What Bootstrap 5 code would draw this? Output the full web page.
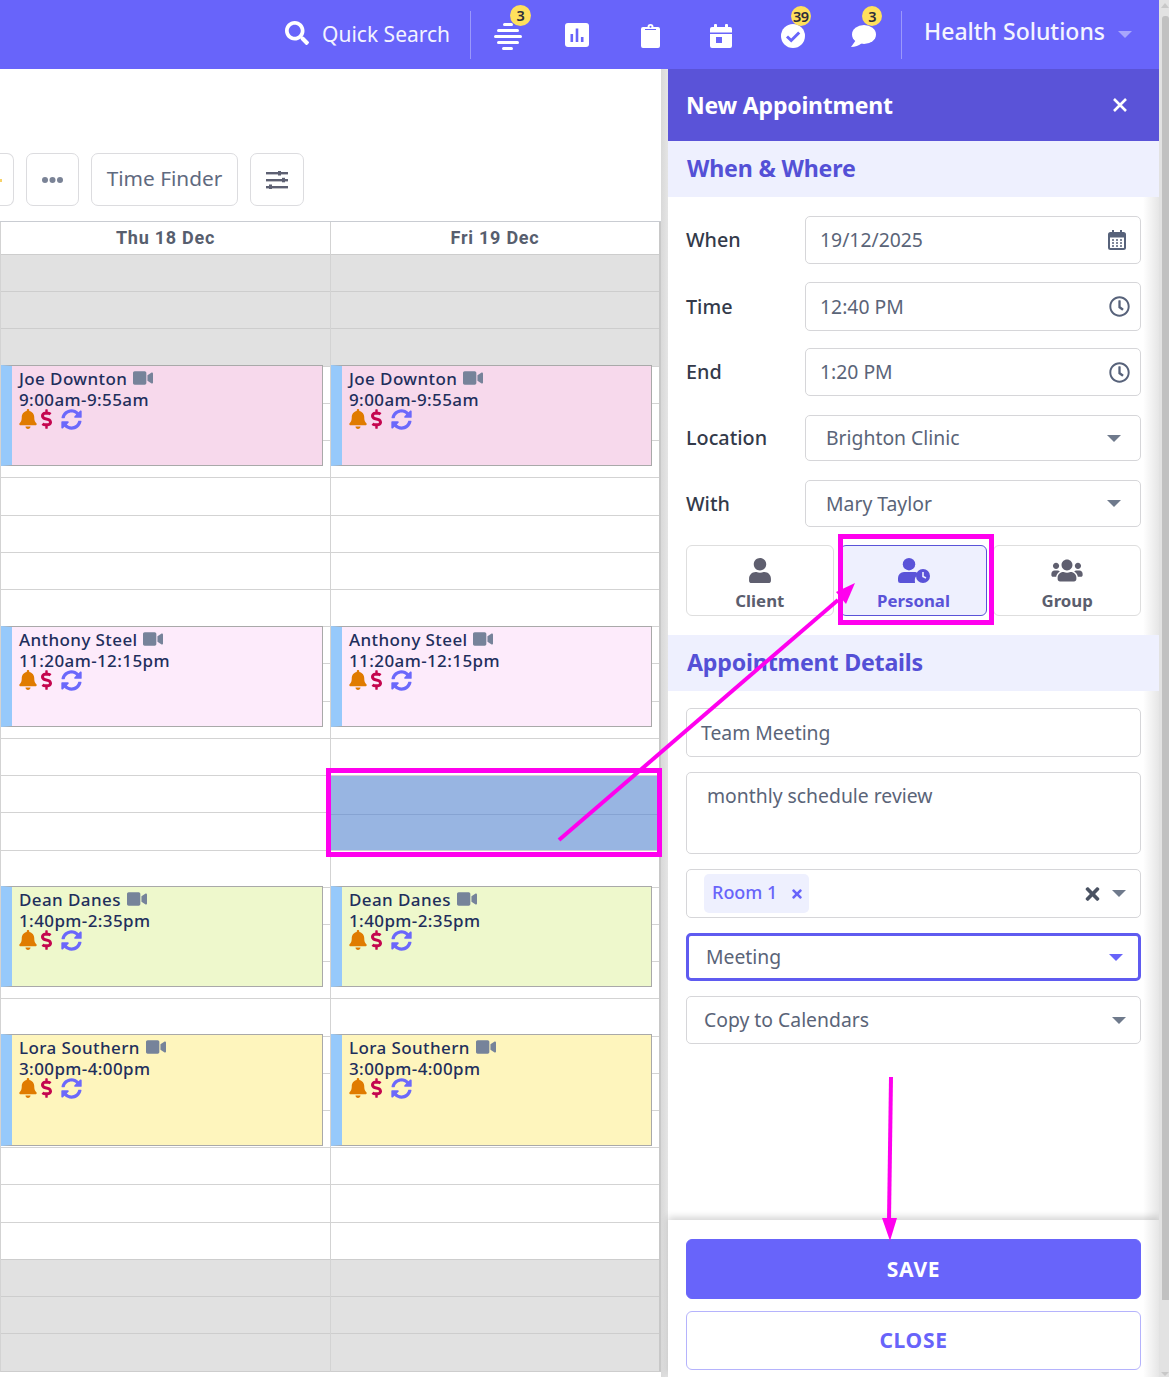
<!DOCTYPE html>
<html lang="en"><head><meta charset="utf-8"><title>New Appointment</title>
<link href="https://cdn.jsdelivr.net/npm/bootstrap@5.3.0/dist/css/bootstrap.min.css" rel="stylesheet">
<script src="https://cdn.jsdelivr.net/npm/bootstrap@5.3.0/dist/js/bootstrap.bundle.min.js"></script>
<style>
html,body{height:1377px;overflow:hidden;margin:0}
body{font-family:"Noto Sans",sans-serif;color:#5a6478;position:relative;background:#fff}
.shell{width:1159px;height:1377px}
.topbar{height:69px;background:#6864fa;color:#fff;padding-right:27px}
.searchglyph{margin-top:-3px}
.qs{font-size:21px;line-height:1;margin-left:13px;margin-right:20px;color:#f3f3ff}
.vsep{width:1px;height:48px;background:#9b98fb}
.navcell{width:71.67px;height:69px;position:relative;display:flex;align-items:center;justify-content:center}
.nudge{margin-top:3px}
.nudge-l2{margin-right:2px}
.nudge-l3{margin-right:4px}
.nudge-r{margin-left:2px}
.pill-count{position:absolute;background:#ffe05c;color:#2d2d3a;font-size:14.5px;font-weight:600;line-height:20px;height:20px;width:20px;border-radius:50%;text-align:center;top:6px;white-space:nowrap;display:flex;justify-content:center}
.pill-a{left:39px;top:5px;width:21px;height:21px;line-height:21px}
.pill-b{left:33px;letter-spacing:-.6px}
.pill-c{left:33px}
.brandname{font-size:23px;font-weight:500;color:#f4f4ff;margin-left:22px;margin-right:13px;line-height:1;position:relative;top:-3px}
.caret-s{width:0;height:0;border-left:7px solid transparent;border-right:7px solid transparent;border-top:7px solid #a8a6fc}
.maincol{width:660px;flex:none}
.toolrow{height:152px;padding-top:84px;gap:12px}
.tbtn{height:53px;background:#fff;border:1px solid #dcdcdf;border-radius:7px;display:flex;align-items:center;justify-content:center;color:#5f6a80;font-size:20.8px}
.tbtn-cut{width:14px;flex:none;border-left:0;border-radius:0 7px 7px 0;position:relative}
.tbtn-cut::before{content:"";position:absolute;left:0;top:25px;width:2px;height:3px;background:#f7d26a}
.tbtn-more{width:53px}
.tbtn-time{width:147px;padding-bottom:2px}
.tbtn-filter{width:54px}
.calgrid{display:grid;grid-template-columns:330px 331px;border-top:1px solid #c9ccd2;width:661px}
.dayhead{height:32px;font-family:Roboto,sans-serif;font-weight:700;font-size:18px;letter-spacing:.75px;color:#575e6e;text-align:center;line-height:32px;border-left:1px solid #d3d3d3}
.daycol{position:relative;border-left:1px solid #d3d3d3;border-bottom:1px solid #cdcdcd}
.daycol2{border-right:2px solid #c8c8c8}
.slot{height:37.23px;border-top:1px solid #d3d3d3;background:#fff}
.slot-off{background:#e1e1e1;border-top-color:#cdcdcd}
.evbox{position:absolute;left:0;width:322px;border:1px solid #a9a9a9;border-left:11px solid #96c9fb;color:#1f2f5c;font-size:17px;line-height:21px;padding:2px 0 0 7px;letter-spacing:.4px;font-weight:500}
.daycol2 .evbox{width:321px}
.ev-pink{background:#f7d9ec;top:111px;height:101px}
.ev-lilac{background:#fdebfb;top:372px;height:101px}
.ev-green{background:#eef8cc;top:632px;height:101px}
.ev-yellow{background:#fef5bd;top:780px;height:112px}
.ev-i{display:flex;align-items:center;height:20px;margin-top:-1px}
.ev-dollar{margin:0 9px 0 4px}
.vidg{margin-left:1px;vertical-align:-2px}
.selblock{position:absolute;left:0;right:0;top:522px;height:74px;background:#98b5e2;border-top:1px solid #98b5e2}
.selline{border-top:1px solid #86a3d2;height:37px;margin-top:37px}
.gutter{width:8px;flex:none;background:linear-gradient(90deg,#d9d9d9,#e6e6e6);height:1308px;margin-left:1px;margin-right:-1px}
.sidep{width:491px;flex:none;height:1308px;display:flex;flex-direction:column;background:linear-gradient(90deg,#fff 0,#fff calc(100% - 16px),#e6e6e6 100%)}
.ptitle{height:72px;background:#5a53d8;color:#fff;font-size:23px;font-weight:700;padding:0 31px 0 18px;letter-spacing:-.2px;flex:none}
.psect{height:56px;background:#eef0fe;color:#5450d6;font-size:23.2px;font-weight:700;padding:0 19px 2px;letter-spacing:-.2px;flex:none}
.psect-b{margin-top:19px}
.pbody{padding:0 18px}
.frow{display:flex;align-items:center}
.frow-a{margin-top:19px;height:48px}
.frow-b{margin-top:18px;height:49px}
.frow-c{margin-top:17px;height:48px}
.frow-d{margin-top:19px;height:46px}
.frow-e{margin-top:19px;height:47px}
.lab{width:119px;flex:none;font-size:19.8px;font-weight:500;color:#333a4a}
.fld{flex:1;height:100%;background:#fff;border:1px solid #d6d6d9;border-radius:5px;display:flex;align-items:center;justify-content:space-between;font-size:19.35px;color:#5a6478;padding:0 10px 0 14px}
.fld-sel{padding-left:20px;padding-right:19px}
.tri{width:0;height:0;border-left:7px solid transparent;border-right:7px solid transparent;border-top:7px solid #6f7a8c}
.tri-on{border-top-color:#6864fa}
.kindrow{margin-top:18px;gap:6px;display:flex}
.kind{flex:1;height:71px;border:1px solid #dedede;border-radius:6px;display:flex;flex-direction:column;align-items:center;color:#5b5e6e;font-weight:700;font-size:16.8px;line-height:22px;padding-top:12px;background:#fff}
.kind svg{margin-bottom:7px}
.kind-on{background:#eef0fe;color:#5a53d8;border-color:#5a53d8}
.fld-title{margin-top:17px;height:49px}
.fld-note{margin-top:15px;height:82px;padding:8px 20px;align-items:flex-start}
.fld-tags{margin-top:15px;height:49px;padding:0 14px 0 17px}
.fld-focus{margin-top:15px;height:48px;padding:0 15px 0 17px;border:3px solid #5f5bf0}
.fld-copy{margin-top:15px;height:48px;padding:0 14px 0 17px}
.roomtag{background:#eef0fe;color:#6864fa;border-radius:5px;height:39px;padding:0 7px 3px 8px;font-size:18px;font-weight:500;display:flex;align-items:center;gap:15px}
.roomtag svg{margin-top:3px}
.tagtail{gap:12px}
.pfoot{margin-top:auto;height:157px;padding:19px 18px 0;box-shadow:0 -3px 7px rgba(0,0,0,.17);background:linear-gradient(90deg,#fff 0,#fff calc(100% - 16px),#e6e6e6 100%)}
.bigbtn{display:block;width:455px;height:60px;border-radius:6px;font-weight:700;font-size:21px;letter-spacing:.7px;background:#6864fa;border:1px solid #6864fa;color:#fff;padding:1px 0 0}
.bigbtn-o{background:#fff;color:#6864fa;border-color:#b5b3fc;margin-top:12px;height:59px;padding:0}
.fakebar{position:absolute;right:0;top:0;width:10px;height:1377px;background:#e2e2e2;padding:16px 0 0 3px}
.fakethumb{width:7px;height:1284px;background:#c1c1c1;border-radius:3px 3px 0 0}
.fakebar::before{content:"";position:absolute;left:2px;top:3px;border-left:4px solid transparent;border-right:4px solid transparent;border-bottom:5px solid #c8c8c8}
.fakebar::after{content:"";position:absolute;left:2px;bottom:1px;border-left:4px solid transparent;border-right:4px solid transparent;border-top:4px solid #c8c8c8}
.anno{position:absolute;left:0;top:0;width:1169px;height:1377px;pointer-events:none}
</style></head>
<body>
<svg width="0" height="0" class="d-block position-absolute"><defs>
<symbol id="i-bell" viewBox="0 0 448 512"><path d="M224 512c35.32 0 63.97-28.65 63.97-64H160.03c0 35.35 28.65 64 63.97 64zm215.39-149.71c-19.32-20.76-55.47-51.99-55.47-154.29 0-77.7-54.48-139.9-127.94-155.16V32c0-17.67-14.32-32-31.98-32s-31.98 14.33-31.98 32v20.84C118.56 68.1 64.08 130.3 64.08 208c0 102.3-36.15 133.53-55.47 154.29-6 6.45-8.66 14.16-8.61 21.71.11 16.4 12.98 32 32.1 32h383.8c19.12 0 32-15.6 32.1-32 .05-7.55-2.61-15.27-8.61-21.71z"/></symbol>
<symbol id="i-dollar" viewBox="0 0 288 512"><path d="M209.2 233.4l-108-31.6C88.7 198.2 80 186.5 80 173.5c0-16.3 13.2-29.5 29.5-29.5h66.3c12.2 0 24.2 3.7 34.2 10.5 6.1 4.1 14.3 3.1 19.5-2l34.8-34c7.1-6.9 6.1-18.4-1.8-24.5C238 74.8 207.4 64.1 176 64V16c0-8.8-7.2-16-16-16h-32c-8.8 0-16 7.2-16 16v48h-2.5C45.8 64-5.4 118.7.5 183.6c4.2 46.1 39.4 83.6 83.8 96.6l102.5 30c12.5 3.7 21.2 15.3 21.2 28.3 0 16.3-13.2 29.5-29.5 29.5h-66.3C100 368 88 364.3 78 357.5c-6.1-4.1-14.3-3.1-19.5 2l-34.8 34c-7.1 6.9-6.1 18.4 1.8 24.5 24.5 19.2 55.1 29.9 86.5 30v48c0 8.8 7.2 16 16 16h32c8.8 0 16-7.2 16-16v-48.2c46.6-.9 90.3-28.6 105.7-72.7 21.5-61.6-14.6-124.8-72.5-141.7z"/></symbol>
<symbol id="i-sync" viewBox="0 0 512 512"><path d="M370.72 133.28C339.458 104.008 298.888 87.962 255.848 88c-77.458.068-144.328 53.178-162.791 126.85-1.344 5.363-6.122 9.15-11.651 9.15H24.103c-7.498 0-13.194-6.807-11.807-14.176C33.933 94.924 134.813 8 256 8c66.448 0 126.791 26.136 171.315 68.685L463.03 40.97C478.149 25.851 504 36.559 504 57.941V192c0 13.255-10.745 24-24 24H345.941c-21.382 0-32.09-25.851-16.971-40.971l41.75-41.749zM32 296h134.059c21.382 0 32.09 25.851 16.971 40.971l-41.75 41.75c31.262 29.273 71.835 45.319 114.876 45.28 77.418-.07 144.315-53.144 162.787-126.849 1.344-5.363 6.122-9.15 11.651-9.15h57.304c7.498 0 13.194 6.807 11.807 14.176C478.067 417.076 377.187 504 256 504c-66.448 0-126.791-26.136-171.315-68.685L48.97 471.03C33.851 486.149 8 475.441 8 454.059V320c0-13.255 10.745-24 24-24z"/></symbol>
<symbol id="i-video" viewBox="0 0 576 512"><path d="M336.2 64H47.8C21.4 64 0 85.4 0 111.8v288.4C0 426.6 21.4 448 47.8 448h288.4c26.4 0 47.8-21.4 47.8-47.8V111.8c0-26.4-21.4-47.8-47.8-47.8zm189.4 37.7L416 177.3v157.4l109.6 75.5c21.2 14.6 50.4-.3 50.4-25.8V127.5c0-25.4-29.1-40.4-50.4-25.8z"/></symbol>
<symbol id="i-clock" viewBox="0 0 512 512"><path d="M256 8C119 8 8 119 8 256s111 248 248 248 248-111 248-248S393 8 256 8zm0 448c-110.5 0-200-89.5-200-200S145.5 56 256 56s200 89.5 200 200-89.5 200-200 200zm61.8-104.4l-84.9-61.7c-3.1-2.3-4.9-5.9-4.9-9.7V116c0-6.6 5.4-12 12-12h32c6.6 0 12 5.4 12 12v141.7l66.8 48.6c5.4 3.9 6.5 11.4 2.6 16.8L334.6 349c-3.9 5.3-11.4 6.5-16.8 2.6z"/></symbol>
<symbol id="i-times" viewBox="0 0 352 512"><path d="M242.72 256l100.07-100.07c12.28-12.28 12.28-32.19 0-44.48l-22.24-22.24c-12.28-12.28-32.19-12.28-44.48 0L176 189.28 75.93 89.21c-12.28-12.28-32.19-12.28-44.48 0L9.21 111.45c-12.28 12.28-12.28 32.19 0 44.48L109.28 256 9.21 356.07c-12.28 12.28-12.28 32.19 0 44.48l22.24 22.24c12.28 12.28 32.2 12.28 44.48 0L176 322.72l100.07 100.07c12.28 12.28 32.2 12.28 44.48 0l22.24-22.24c12.28-12.28 12.28-32.19 0-44.48L242.72 256z"/></symbol>
<symbol id="i-user" viewBox="0 0 448 512"><path d="M224 256c70.7 0 128-57.3 128-128S294.7 0 224 0 96 57.3 96 128s57.3 128 128 128zm89.6 32h-16.7c-22.2 10.2-46.9 16-72.9 16s-50.6-5.8-72.9-16h-16.7C60.2 288 0 348.2 0 422.4V464c0 26.5 21.5 48 48 48h352c26.5 0 48-21.5 48-48v-41.6c0-74.2-60.2-134.4-134.4-134.4z"/></symbol>
<symbol id="i-users" viewBox="0 0 640 512"><path d="M96 224c35.3 0 64-28.7 64-64s-28.7-64-64-64-64 28.7-64 64 28.7 64 64 64zm448 0c35.3 0 64-28.7 64-64s-28.7-64-64-64-64 28.7-64 64 28.7 64 64 64zm32 32h-64c-17.6 0-33.5 7.1-45.1 18.6 40.3 22.1 68.9 62 75.1 109.4h66c17.7 0 32-14.3 32-32v-32c0-35.3-28.7-64-64-64zm-256 0c61.9 0 112-50.1 112-112S381.9 32 320 32 208 82.1 208 144s50.1 112 112 112zm76.8 32h-8.3c-20.8 10-43.9 16-68.5 16s-47.6-6-68.5-16h-8.3C179.6 288 128 339.6 128 403.2V432c0 26.5 21.5 48 48 48h288c26.5 0 48-21.5 48-48v-28.8c0-63.6-51.6-115.2-115.2-115.2zm-223.7-13.4C161.5 263.1 145.6 256 128 256H64c-35.3 0-64 28.7-64 64v32c0 17.7 14.3 32 32 32h65.9c6.3-47.4 34.9-87.3 75.2-109.4z"/></symbol>
</defs></svg>

<div class="shell">
<header class="topbar d-flex align-items-center justify-content-end">
  <svg class="searchglyph" width="24" height="24" viewBox="0 0 512 512" fill="#fff"><path d="M505 442.7L405.3 343c-4.5-4.5-10.6-7-17-7H372c27.6-35.3 44-79.7 44-128C416 93.1 322.9 0 208 0S0 93.1 0 208s93.1 208 208 208c48.3 0 92.7-16.4 128-44v16.3c0 6.4 2.5 12.5 7 17l99.7 99.7c9.4 9.4 24.6 9.4 33.9 0l28.3-28.3c9.4-9.4 9.4-24.6.1-34zM208 336c-70.7 0-128-57.2-128-128 0-70.7 57.2-128 128-128 70.7 0 128 57.2 128 128 0 70.7-57.2 128-128 128z"/></svg>
  <span class="qs">Quick Search</span>
  <span class="vsep"></span>
  <div class="navcell"><svg class="nudge nudge-r" width="28" height="27" viewBox="0 0 28 27" fill="#fff"><rect x="9" y="0" width="10" height="3" rx="1.5"/><rect x="3" y="6" width="22" height="3" rx="1.5"/><rect x="0" y="12" width="28" height="3" rx="1.5"/><rect x="3" y="18" width="22" height="3" rx="1.5"/><rect x="8" y="24" width="11" height="3" rx="1.5"/></svg><span class="pill-count pill-a">3</span></div>
  <div class="navcell"><svg class="nudge-l3" width="24" height="24" viewBox="0 0 24 24"><rect width="24" height="24" rx="3" fill="#fff"/><path d="M5.500 11h2.600v8H5.500zM10.700 5.500h2.600V19h-2.600zM15.900 14h2.600v5h-2.600z" fill="#6864fa"/></svg></div>
  <div class="navcell"><svg class="nudge" width="19" height="24" viewBox="0 0 19 24" fill="#fff"><path d="M2 3h4.500a3 3 0 0 1 6 0H17a2 2 0 0 1 2 2v17a2 2 0 0 1-2 2H2a2 2 0 0 1-2-2V5a2 2 0 0 1 2-2z"/><circle cx="9.500" cy="2.800" r="1" fill="#6864fa"/><rect x="4" y="5" width="11" height="1" fill="#6864fa"/></svg></div>
  <div class="navcell"><svg class="nudge nudge-l2" width="22" height="24" viewBox="0 0 22 24" fill="#fff"><rect x="4" y="0" width="3" height="5" rx="1"/><rect x="15" y="0" width="3" height="5" rx="1"/><path d="M2 3h18a2 2 0 0 1 2 2v3.500H0V5a2 2 0 0 1 2-2zM0 10h22v12a2 2 0 0 1-2 2H2a2 2 0 0 1-2-2z"/><rect x="6" y="13" width="6" height="6" fill="#6864fa"/></svg></div>
  <div class="navcell"><svg class="nudge nudge-l2" width="24" height="24" viewBox="0 0 24 24"><circle cx="12" cy="12" r="12" fill="#fff"/><path d="M6 12.500l4.200 4 8-8" fill="none" stroke="#6864fa" stroke-width="3"/></svg><span class="pill-count pill-b">39</span></div>
  <div class="navcell"><svg class="nudge nudge-l3" width="25" height="22" viewBox="0 0 25 22" fill="#fff"><ellipse cx="13" cy="9.500" rx="12" ry="9.500"/><path d="M5 15 0 22c4 0 8-1.500 11-4z"/></svg><span class="pill-count pill-c">3</span></div>
  <span class="vsep"></span>
  <span class="brandname">Health Solutions</span>
  <span class="caret-s"></span>
</header>

<div class="d-flex">
  <main class="maincol">
    <div class="toolrow d-flex">
      <div class="tbtn tbtn-cut"></div>
      <div class="tbtn tbtn-more"><svg width="21" height="6" viewBox="0 0 21 6" fill="#7a8396"><circle cx="3" cy="3" r="3"/><circle cx="10.500" cy="3" r="3"/><circle cx="18" cy="3" r="3"/></svg></div>
      <div class="tbtn tbtn-time">Time Finder</div>
      <div class="tbtn tbtn-filter"><svg width="22" height="18" viewBox="0 0 22 18" fill="#5d6072"><rect y="1" width="22" height="2.400"/><rect x="12" y="0" width="3" height="4.500"/><rect y="8" width="22" height="2.400"/><rect x="16" y="6.800" width="3" height="4.500"/><rect y="15" width="22" height="2.400"/><rect x="3" y="13.500" width="3" height="4.500"/></svg></div>
    </div>
    <div class="calgrid">
      <div class="dayhead">Thu 18 Dec</div>
      <div class="dayhead daycol2">Fri 19 Dec</div>
      <div class="daycol">
        <div class="slot slot-off"></div><div class="slot slot-off"></div><div class="slot slot-off"></div>
        <div class="slot"></div><div class="slot"></div><div class="slot"></div><div class="slot"></div><div class="slot"></div><div class="slot"></div><div class="slot"></div><div class="slot"></div><div class="slot"></div><div class="slot"></div><div class="slot"></div><div class="slot"></div><div class="slot"></div><div class="slot"></div><div class="slot"></div><div class="slot"></div><div class="slot"></div><div class="slot"></div><div class="slot"></div><div class="slot"></div><div class="slot"></div><div class="slot"></div><div class="slot"></div><div class="slot"></div>
        <div class="slot slot-off"></div><div class="slot slot-off"></div><div class="slot slot-off"></div>
        <div class="evbox ev-pink">Joe Downton <svg class="vidg" width="20" height="18" fill="#76839a"><use href="#i-video"/></svg><br>9:00am-9:55am<div class="ev-i"><svg width="18" height="20" fill="#e07b00"><use href="#i-bell"/></svg><svg class="ev-dollar" width="11" height="20" fill="#c4064f"><use href="#i-dollar"/></svg><svg width="21" height="21" fill="#6b68fb"><use href="#i-sync"/></svg></div></div>
        <div class="evbox ev-lilac">Anthony Steel <svg class="vidg" width="20" height="18" fill="#76839a"><use href="#i-video"/></svg><br>11:20am-12:15pm<div class="ev-i"><svg width="18" height="20" fill="#e07b00"><use href="#i-bell"/></svg><svg class="ev-dollar" width="11" height="20" fill="#c4064f"><use href="#i-dollar"/></svg><svg width="21" height="21" fill="#6b68fb"><use href="#i-sync"/></svg></div></div>
        <div class="evbox ev-green">Dean Danes <svg class="vidg" width="20" height="18" fill="#76839a"><use href="#i-video"/></svg><br>1:40pm-2:35pm<div class="ev-i"><svg width="18" height="20" fill="#e07b00"><use href="#i-bell"/></svg><svg class="ev-dollar" width="11" height="20" fill="#c4064f"><use href="#i-dollar"/></svg><svg width="21" height="21" fill="#6b68fb"><use href="#i-sync"/></svg></div></div>
        <div class="evbox ev-yellow">Lora Southern <svg class="vidg" width="20" height="18" fill="#76839a"><use href="#i-video"/></svg><br>3:00pm-4:00pm<div class="ev-i"><svg width="18" height="20" fill="#e07b00"><use href="#i-bell"/></svg><svg class="ev-dollar" width="11" height="20" fill="#c4064f"><use href="#i-dollar"/></svg><svg width="21" height="21" fill="#6b68fb"><use href="#i-sync"/></svg></div></div>
      </div>
      <div class="daycol daycol2">
        <div class="slot slot-off"></div><div class="slot slot-off"></div><div class="slot slot-off"></div>
        <div class="slot"></div><div class="slot"></div><div class="slot"></div><div class="slot"></div><div class="slot"></div><div class="slot"></div><div class="slot"></div><div class="slot"></div><div class="slot"></div><div class="slot"></div><div class="slot"></div><div class="slot"></div><div class="slot"></div><div class="slot"></div><div class="slot"></div><div class="slot"></div><div class="slot"></div><div class="slot"></div><div class="slot"></div><div class="slot"></div><div class="slot"></div><div class="slot"></div><div class="slot"></div><div class="slot"></div>
        <div class="slot slot-off"></div><div class="slot slot-off"></div><div class="slot slot-off"></div>
        <div class="selblock"><div class="selline"></div></div>
        <div class="evbox ev-pink">Joe Downton <svg class="vidg" width="20" height="18" fill="#76839a"><use href="#i-video"/></svg><br>9:00am-9:55am<div class="ev-i"><svg width="18" height="20" fill="#e07b00"><use href="#i-bell"/></svg><svg class="ev-dollar" width="11" height="20" fill="#c4064f"><use href="#i-dollar"/></svg><svg width="21" height="21" fill="#6b68fb"><use href="#i-sync"/></svg></div></div>
        <div class="evbox ev-lilac">Anthony Steel <svg class="vidg" width="20" height="18" fill="#76839a"><use href="#i-video"/></svg><br>11:20am-12:15pm<div class="ev-i"><svg width="18" height="20" fill="#e07b00"><use href="#i-bell"/></svg><svg class="ev-dollar" width="11" height="20" fill="#c4064f"><use href="#i-dollar"/></svg><svg width="21" height="21" fill="#6b68fb"><use href="#i-sync"/></svg></div></div>
        <div class="evbox ev-green">Dean Danes <svg class="vidg" width="20" height="18" fill="#76839a"><use href="#i-video"/></svg><br>1:40pm-2:35pm<div class="ev-i"><svg width="18" height="20" fill="#e07b00"><use href="#i-bell"/></svg><svg class="ev-dollar" width="11" height="20" fill="#c4064f"><use href="#i-dollar"/></svg><svg width="21" height="21" fill="#6b68fb"><use href="#i-sync"/></svg></div></div>
        <div class="evbox ev-yellow">Lora Southern <svg class="vidg" width="20" height="18" fill="#76839a"><use href="#i-video"/></svg><br>3:00pm-4:00pm<div class="ev-i"><svg width="18" height="20" fill="#e07b00"><use href="#i-bell"/></svg><svg class="ev-dollar" width="11" height="20" fill="#c4064f"><use href="#i-dollar"/></svg><svg width="21" height="21" fill="#6b68fb"><use href="#i-sync"/></svg></div></div>
      </div>
    </div>
  </main>
  <div class="gutter"></div>
  <aside class="sidep">
    <div class="ptitle d-flex align-items-center justify-content-between"><span>New Appointment</span><svg width="16" height="16" viewBox="0 0 16 16" stroke="#fff" stroke-width="2.600" fill="none"><path d="M2 2l12 12M14 2 2 14"/></svg></div>
    <div class="psect d-flex align-items-center">When &amp; Where</div>
    <div class="pbody">
      <div class="frow frow-a"><span class="lab">When</span><div class="fld"><span>19/12/2025</span><svg class="me-1" width="18" height="20" viewBox="0 0 18 20" fill="none" stroke="#57627a" stroke-width="2"><rect x="1" y="3" width="16" height="16" rx="1.500"/><path d="M1 5.500h16" stroke-width="4"/><path d="M5 0v4M13 0v4"/><path d="M4 10h10M4 13h10M4 16h10" stroke-dasharray="2 2" stroke-width="1.500"/></svg></div></div>
      <div class="frow frow-b"><span class="lab">Time</span><div class="fld"><span>12:40 PM</span><svg width="21" height="21" fill="#57627a"><use href="#i-clock"/></svg></div></div>
      <div class="frow frow-c"><span class="lab">End</span><div class="fld"><span>1:20 PM</span><svg width="21" height="21" fill="#57627a"><use href="#i-clock"/></svg></div></div>
      <div class="frow frow-d"><span class="lab">Location</span><div class="fld fld-sel"><span>Brighton Clinic</span><span class="tri"></span></div></div>
      <div class="frow frow-e"><span class="lab">With</span><div class="fld fld-sel"><span>Mary Taylor</span><span class="tri"></span></div></div>
      <div class="kindrow">
        <div class="kind"><svg width="22" height="25" fill="#5f5f6f"><use href="#i-user"/></svg>Client</div>
        <div class="kind kind-on"><svg width="32" height="25" viewBox="0 0 32 25" fill="#5a53d8"><circle cx="11" cy="6.200" r="6.200"/><path d="M6 14h10c2 0 3.500.6 4.700 1.600A9.500 9.500 0 0 0 17 25H2.300A2.300 2.300 0 0 1 0 22.700V20a6 6 0 0 1 6-6z"/><circle cx="25" cy="18" r="7"/><path d="M25 14v4.500l3 1.500" fill="none" stroke="#eef0fe" stroke-width="1.600"/></svg>Personal</div>
        <div class="kind"><svg width="32" height="25" fill="#5f5f6f"><use href="#i-users"/></svg>Group</div>
      </div>
    </div>
    <div class="psect psect-b d-flex align-items-center">Appointment Details</div>
    <div class="pbody">
      <div class="fld fld-title">Team Meeting</div>
      <div class="fld fld-note">monthly schedule review</div>
      <div class="fld fld-tags"><span class="roomtag">Room 1<svg width="10" height="14" fill="#6864fa"><use href="#i-times"/></svg></span><span class="d-flex align-items-center tagtail"><svg width="15" height="20" fill="#4a5262"><use href="#i-times"/></svg><span class="tri"></span></span></div>
      <div class="fld fld-focus">Meeting<span class="tri tri-on"></span></div>
      <div class="fld fld-copy">Copy to Calendars<span class="tri"></span></div>
    </div>
    <div class="pfoot">
      <button type="button" class="btn bigbtn">SAVE</button>
      <button type="button" class="btn bigbtn bigbtn-o">CLOSE</button>
    </div>
  </aside>
</div>
</div>

<div class="fakebar"><div class="fakethumb"></div></div>

<svg class="anno" viewBox="0 0 1169 1377" fill="none">
  <rect x="328.500" y="770.500" width="331" height="84" stroke="#ff00ee" stroke-width="5"/>
  <rect x="840.500" y="536.500" width="151" height="86" stroke="#ff00ee" stroke-width="5"/>
  <path d="M559 840 838 600" stroke="#ff00ee" stroke-width="4"/>
  <path d="M855 583 836 592 846 604z" fill="#ff00ee"/>
  <path d="M891 1077 889 1220" stroke="#ff00ee" stroke-width="4"/>
  <path d="M882 1218h15l-7 23z" fill="#ff00ee"/>
</svg>
</body></html>
